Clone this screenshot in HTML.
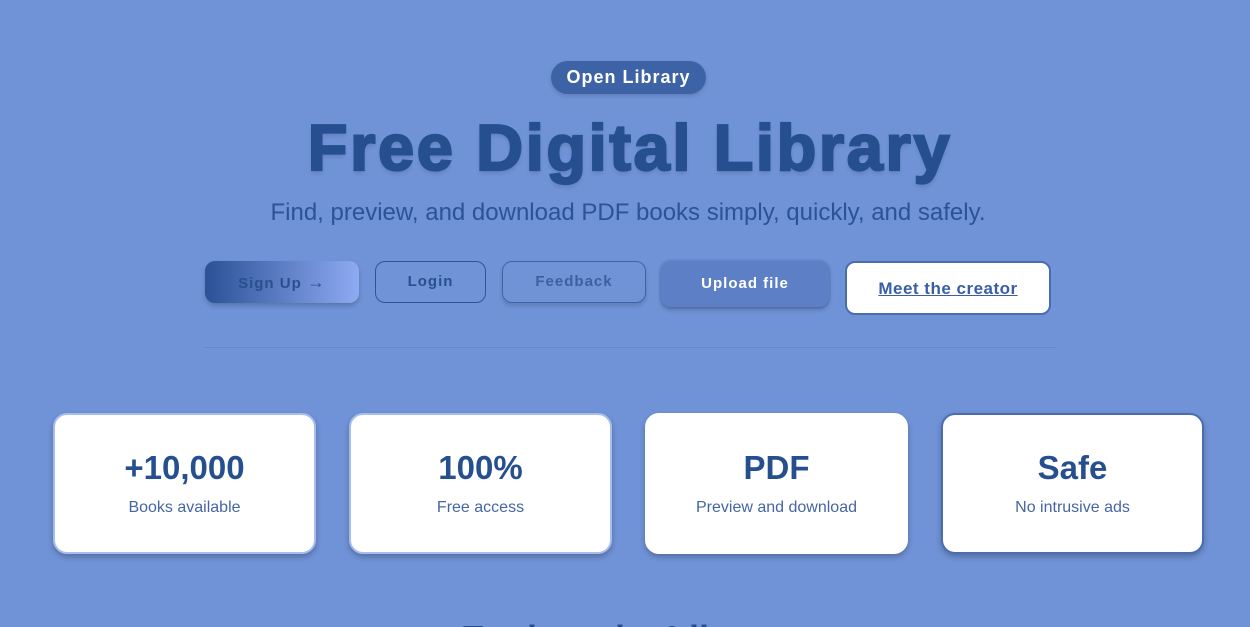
<!DOCTYPE html>
<html><head><style>
*{margin:0;padding:0;box-sizing:border-box}
html,body{width:1250px;height:627px;overflow:hidden}
body{background:#7093d7;font-family:"Liberation Sans",Arial,sans-serif;position:relative}
.badge{position:absolute;left:551px;top:61px;width:155px;height:33px;border-radius:17px;background:#3d63a6;color:#fff;font-weight:bold;font-size:18px;letter-spacing:1px;text-align:center;line-height:33px;box-shadow:0 2px 4px rgba(0,0,0,.15)}
h1{position:absolute;left:0;width:1260px;top:110px;text-align:center;font-size:65px;font-weight:900;color:#264f90;letter-spacing:2.6px;-webkit-text-stroke:2.2px #264f90;text-shadow:0 3px 5px rgba(0,0,0,.15)}
.sub{position:absolute;left:0;width:1256px;top:199px;text-align:center;font-size:24px;color:#2e5296}
.btn{position:absolute;border-radius:10px;font-weight:bold;font-size:15px;letter-spacing:1px;text-align:center;color:#2a4f8f}
.b1{left:205px;top:261px;width:154px;height:42px;line-height:42px;background:linear-gradient(90deg,#2c5196,#8eaaf2);box-shadow:0 3px 5px rgba(0,0,0,.2)}
.b2{left:375px;top:261px;width:111px;height:42px;line-height:40px;border:1.5px solid #2f5599}
.b3{left:502px;top:261px;width:144px;height:42px;line-height:40px;border:1.5px solid #3f63a6;color:#3f60a0;box-shadow:0 3px 4px rgba(0,0,0,.15)}
.b4{left:661px;top:261px;width:168px;height:46px;line-height:46px;background:#5c7fc6;color:#fff;box-shadow:0 3px 5px rgba(0,0,0,.2),0 0 0 2px #6689d0}
.b5{left:845px;top:261px;width:206px;height:54px;line-height:52px;background:#fff;border:2px solid #4a6db0;color:#3a5ea6;font-size:17px;text-decoration:underline;letter-spacing:.5px}
.hr{position:absolute;left:204px;top:347px;width:852px;height:1px;background:#6687c9}
.card{position:absolute;top:413px;width:263px;height:141px;background:#fff;border-radius:14px;text-align:center;box-shadow:0 3px 6px rgba(0,0,0,.25);border:2px solid #a7bdf0}
.card b{display:block;margin-top:34px;font-size:33px;color:#264f90}
.card span{display:block;margin-top:12px;font-size:16px;color:#4565a5}
.foot{position:absolute;left:0;width:1250px;top:619px;text-align:center;font-size:36px;line-height:40px;font-weight:bold;color:#264f90}
</style></head><body>
<div class="badge">Open Library</div>
<h1>Free Digital Library</h1>
<div class="sub">Find, preview, and download PDF books simply, quickly, and safely.</div>
<div class="btn b1">Sign Up <span style="font-size:18px">&#8594;</span></div>
<div class="btn b2">Login</div>
<div class="btn b3">Feedback</div>
<div class="btn b4">Upload file</div>
<div class="btn b5">Meet the creator</div>
<div class="hr"></div>
<div class="card" style="left:53px"><b>+10,000</b><span>Books available</span></div>
<div class="card" style="left:349px"><b>100%</b><span>Free access</span></div>
<div class="card" style="left:645px;border-color:#fff"><b>PDF</b><span>Preview and download</span></div>
<div class="card" style="left:941px;border-color:#4b6db0"><b>Safe</b><span>No intrusive ads</span></div>
<div class="foot">Explore the Library</div>
</body></html>
